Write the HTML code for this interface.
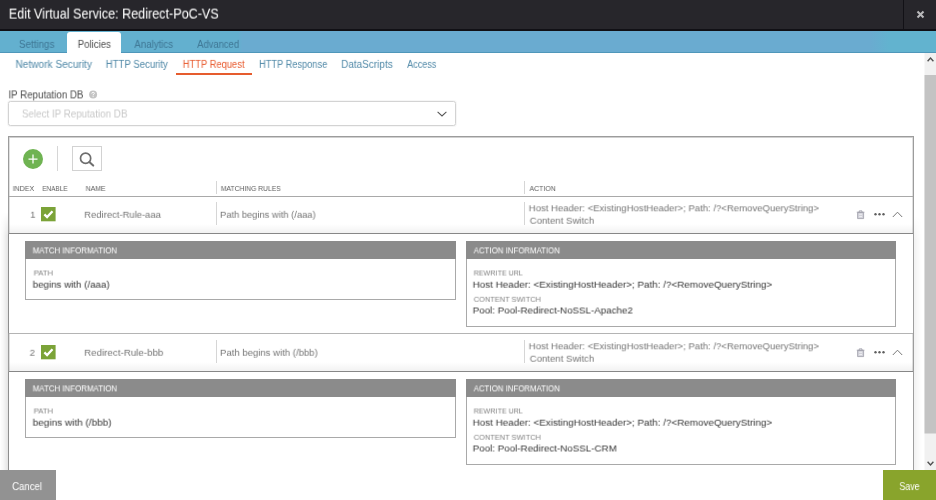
<!DOCTYPE html>
<html>
<head>
<meta charset="utf-8">
<title>Edit Virtual Service</title>
<style>
*{box-sizing:border-box;margin:0;padding:0}
html,body{width:936px;height:500px;overflow:hidden;background:#fff;font-family:"Liberation Sans",sans-serif;}
body{position:relative}
.abs{position:absolute}
.t{position:absolute;white-space:nowrap;line-height:1;transform-origin:0 0;will-change:transform}
#hdr{left:0;top:0;width:936px;height:31px;background:#27262b;border-bottom:2px solid #111015}
#hsep{left:903px;top:0;width:1px;height:29px;background:#121116}
#tabs{left:0;top:31px;width:936px;height:22px;background:linear-gradient(90deg,#63b0cf 0,#63b0cf 25.4%,#6aabd0 25.9%,#6aabd0 93%,#62b3cf 95%,#62b3cf 100%);border-bottom:1px solid #4f97ba}
#tabact{left:67px;top:32px;width:54px;height:22px;background:#fff;border-radius:3px 3px 0 0}
#subline{left:176px;top:73px;width:76px;height:2px;background:#e65c2e}
#sb{left:925px;top:53px;width:11px;height:416px;background:#f1f1f1}
#sbthumb{left:925px;top:75px;width:11px;height:358px;background:#c1c1c1}
#sel{left:8px;top:101px;width:448px;height:25px;border:1px solid #d3d3d3;border-radius:2.5px;background:#fff;box-shadow:0 0 0 1px rgba(0,0,0,.035)}
#grid{left:8px;top:136px;width:906px;height:341px;border:1px solid #9c9c9c;border-bottom:none;box-shadow:inset 0 1px 0 #d0d0d0,inset 1px 0 0 #e0e0e0,inset -1px 0 0 #e0e0e0}
.hl{position:absolute;left:9px;width:904px;height:1px;background:#a9a9a9}
.vs{position:absolute;width:1px;background:#d6d6d6}
.chk{position:absolute;left:41px;width:14px;height:14px;background:#7fa83d}
.exp{position:absolute;left:8px;width:906px;background:#fff;border-left:1px solid #8e8e8e;border-right:1px solid #9e9e9e}
.box{position:absolute;border:1px solid #a9a9a9;background:#fff}
.box .bar{position:absolute;left:-1px;top:-1px;right:-1px;height:18px;background:#8b8b8b}
.shl{position:absolute;left:0;width:8px;background:linear-gradient(90deg,rgba(0,0,0,0),rgba(0,0,0,.03) 40%,rgba(0,0,0,.105));-webkit-mask-image:linear-gradient(180deg,transparent 0,#000 24px);mask-image:linear-gradient(180deg,transparent 0,#000 24px)}
.shr{position:absolute;left:914px;width:8px;background:linear-gradient(90deg,rgba(0,0,0,.05),rgba(0,0,0,0));-webkit-mask-image:linear-gradient(180deg,transparent 0,#000 24px);mask-image:linear-gradient(180deg,transparent 0,#000 24px)}
.sht{position:absolute;left:9px;width:904px;height:9px;background:linear-gradient(180deg,rgba(0,0,0,0),rgba(0,0,0,.05))}
.hl.dk{background:#878787}
#cancel{left:0;top:470px;width:56px;height:30px;background:#929292}
#save{left:883px;top:470px;width:53px;height:30px;background:#89a42c}
</style>
</head>
<body>
<div id="hdr" class="abs"></div>
<div id="hsep" class="abs"></div>
<svg class="abs" style="left:916px;top:9.5px" width="9" height="9" viewBox="0 0 9 9"><path d="M1.5 1.5L7.5 7.5M7.5 1.5L1.5 7.5" stroke="#b9b9bb" stroke-width="2.1" fill="none"/></svg>
<div id="tabs" class="abs"></div>
<div id="tabact" class="abs"></div>
<div id="subline" class="abs"></div>

<svg class="abs" style="left:924px;top:53px" width="12" height="417" viewBox="0 0 12 417"><rect x="0.5" y="0" width="11.5" height="417" fill="#f1f1f1"/><rect x="0.5" y="22" width="11.5" height="358.5" fill="#c3c3c3"/></svg>
<svg class="abs" style="left:927px;top:57px" width="7" height="5" viewBox="0 0 7 5"><path d="M0.6 4.2L3.5 1.1L6.4 4.2" stroke="#505050" stroke-width="1.4" fill="none"/></svg>
<svg class="abs" style="left:927px;top:461px" width="7" height="5" viewBox="0 0 7 5"><path d="M0.6 0.8L3.5 3.9L6.4 0.8" stroke="#505050" stroke-width="1.4" fill="none"/></svg>

<svg class="abs" style="left:89px;top:90px" width="9" height="9" viewBox="0 0 9 9"><circle cx="4.1" cy="4.4" r="4" fill="#c4c4c4"/><path d="M2.8 3.6Q2.8 2.3 4.1 2.3Q5.4 2.3 5.4 3.4Q5.4 4.1 4.1 4.7V5.4" stroke="#fff" stroke-width="0.9" fill="none"/><circle cx="4.1" cy="6.6" r="0.55" fill="#fff"/></svg>
<div id="sel" class="abs">
<svg class="abs" style="left:428px;top:8.5px" width="10" height="6" viewBox="0 0 10 6"><path d="M0.6 0.8L5 5L9.4 0.8" stroke="#555" stroke-width="1.05" fill="none"/></svg>
</div>

<div class="shl" style="top:212px;height:258px"></div><div class="shr" style="top:216px;height:254px"></div>
<div id="grid" class="abs"></div>
<!-- toolbar -->
<div class="abs" style="left:23px;top:149px;width:20px;height:20px;border-radius:50%;background:#6fb352"></div>
<svg class="abs" style="left:28px;top:154px" width="10" height="10" viewBox="0 0 10 10"><path d="M5 0.5V9.5M0.5 5H9.5" stroke="#fff" stroke-width="1.25" fill="none"/></svg>
<div class="vs" style="left:57px;top:146px;height:25px"></div>
<div class="abs" style="left:72px;top:146px;width:30px;height:25px;border:1px solid #d2d2d2"></div>
<svg class="abs" style="left:79px;top:151px" width="16" height="16" viewBox="0 0 16 16"><circle cx="6.6" cy="7.3" r="5.1" stroke="#6e6e6e" stroke-width="1.7" fill="none"/><path d="M10.6 11.2L14.2 14.6" stroke="#6e6e6e" stroke-width="2" stroke-linecap="round"/></svg>

<!-- header -->
<div class="vs" style="left:216px;top:181px;height:13px"></div>
<div class="vs" style="left:524px;top:181px;height:13px"></div>
<div class="hl" style="top:196px"></div>

<!-- row 1 -->
<svg class="abs" style="left:41px;top:207px" width="16" height="16" viewBox="0 0 16 16"><rect x="0" y="0" width="14.6" height="14.3" fill="#7ba338"/><path d="M3.4 7.4L6.1 10.1L11.5 4.3" stroke="#fff" stroke-width="2.3" fill="none"/></svg>
<div class="vs" style="left:216px;top:202px;height:23px"></div>
<div class="vs" style="left:524px;top:202px;height:23px"></div>
<svg class="abs ico" style="left:856px;top:209px" width="48" height="11" viewBox="0 0 48 11"><path d="M1.6 3.6H7.6V9.6H1.6Z" fill="#d2d2da" stroke="#9d9da8" stroke-width="0.8"/><path d="M0.8 3.2H8.4M3.2 3V1.9H6V3" stroke="#9d9da8" stroke-width="0.9" fill="none"/><path d="M3.2 5.2H6M3.2 7.6H6" stroke="#f4f4f6" stroke-width="0.9" fill="none"/><circle cx="19.5" cy="5.2" r="1.2" fill="#5e5e5e"/><circle cx="23.5" cy="5.2" r="1.2" fill="#5e5e5e"/><circle cx="27.5" cy="5.2" r="1.2" fill="#5e5e5e"/><path d="M36.8 8L41.5 3.2L46.2 8" stroke="#707070" stroke-width="0.95" fill="none"/></svg>
<div class="sht" style="top:224px"></div><div class="hl dk" style="top:233px"></div>

<!-- expand 1 -->
<div class="exp" style="top:234px;height:99px"></div>
<div class="box" style="left:25px;top:241px;width:431px;height:59px"><div class="bar"></div></div>
<div class="box" style="left:466px;top:241px;width:430px;height:86px"><div class="bar"></div></div>
<div class="hl" style="top:333px;background:#b4b4b4"></div>

<!-- row 2 -->
<svg class="abs" style="left:41px;top:345px" width="16" height="16" viewBox="0 0 16 16"><rect x="0" y="0" width="14.6" height="14.3" fill="#7ba338"/><path d="M3.4 7.4L6.1 10.1L11.5 4.3" stroke="#fff" stroke-width="2.3" fill="none"/></svg>
<div class="vs" style="left:216px;top:340px;height:23px"></div>
<div class="vs" style="left:524px;top:340px;height:23px"></div>
<svg class="abs ico" style="left:856px;top:347px" width="48" height="11" viewBox="0 0 48 11"><path d="M1.6 3.6H7.6V9.6H1.6Z" fill="#d2d2da" stroke="#9d9da8" stroke-width="0.8"/><path d="M0.8 3.2H8.4M3.2 3V1.9H6V3" stroke="#9d9da8" stroke-width="0.9" fill="none"/><path d="M3.2 5.2H6M3.2 7.6H6" stroke="#f4f4f6" stroke-width="0.9" fill="none"/><circle cx="19.5" cy="5.2" r="1.2" fill="#5e5e5e"/><circle cx="23.5" cy="5.2" r="1.2" fill="#5e5e5e"/><circle cx="27.5" cy="5.2" r="1.2" fill="#5e5e5e"/><path d="M36.8 8L41.5 3.2L46.2 8" stroke="#707070" stroke-width="0.95" fill="none"/></svg>
<div class="sht" style="top:362px"></div><div class="hl dk" style="top:371px"></div>

<!-- expand 2 -->
<div class="exp" style="top:372px;height:105px"></div>
<div class="box" style="left:25px;top:379px;width:431px;height:59px"><div class="bar"></div></div>
<div class="box" style="left:466px;top:379px;width:430px;height:86px"><div class="bar"></div></div>

<!-- footer -->
<div class="abs" style="left:0;top:470px;width:924px;height:30px;background:#fff"></div>
<div id="cancel" class="abs"></div>
<div id="save" class="abs"></div>
<div class="t" style="left:8px;top:7px;font-size:13.8px;color:#ffffff;transform:translate(0.79px,0.60px) scaleX(0.9140) rotate(.003deg);">Edit Virtual Service: Redirect-PoC-VS</div>
<div class="t" style="left:18px;top:39px;font-size:10px;color:#3d7593;transform:translate(0.92px,0.90px) scaleX(0.9829) rotate(.003deg);">Settings</div>
<div class="t" style="left:77px;top:39px;font-size:10px;color:#4d4d4d;transform:translate(0.74px,0.90px) scaleX(0.9606) rotate(.003deg);">Policies</div>
<div class="t" style="left:134px;top:39px;font-size:10px;color:#3d7593;transform:translate(0.40px,0.90px) scaleX(0.9675) rotate(.003deg);">Analytics</div>
<div class="t" style="left:197px;top:39px;font-size:10px;color:#3d7593;transform:translate(0.20px,0.90px) scaleX(0.9409) rotate(.003deg);">Advanced</div>
<div class="t" style="left:15px;top:59px;font-size:10px;color:#4f88a7;transform:translate(0.49px,0.90px) scaleX(1.0122) rotate(.003deg);">Network Security</div>
<div class="t" style="left:105px;top:59px;font-size:10px;color:#4f88a7;transform:translate(0.74px,0.90px) scaleX(0.9594) rotate(.003deg);">HTTP Security</div>
<div class="t" style="left:182px;top:59px;font-size:10px;color:#e8582b;transform:translate(0.76px,0.90px) scaleX(0.9369) rotate(.003deg);">HTTP Request</div>
<div class="t" style="left:259px;top:59px;font-size:10px;color:#4f88a7;transform:translate(0.07px,0.90px) scaleX(0.9250) rotate(.003deg);">HTTP Response</div>
<div class="t" style="left:341px;top:59px;font-size:10px;color:#4f88a7;transform:translate(0.20px,0.90px) scaleX(0.9980) rotate(.003deg);">DataScripts</div>
<div class="t" style="left:407px;top:59px;font-size:10px;color:#4f88a7;transform:translate(0.20px,0.90px) scaleX(0.9031) rotate(.003deg);">Access</div>
<div class="t" style="left:8px;top:90px;font-size:10.2px;color:#4a4a4a;transform:translate(0.45px,0.40px) scaleX(0.9545) rotate(.003deg);">IP Reputation DB</div>
<div class="t" style="left:21px;top:109px;font-size:10.2px;color:#c8c8c8;transform:translate(0.94px,0.50px) scaleX(0.9620) rotate(.003deg);">Select IP Reputation DB</div>
<div class="t" style="left:12px;top:185px;font-size:7.6px;color:#5c5c5c;transform:translate(0.78px,0.00px) scaleX(0.9182) rotate(.003deg);">INDEX</div>
<div class="t" style="left:42px;top:185px;font-size:7.6px;color:#5c5c5c;transform:translate(0.40px,0.00px) scaleX(0.8400) rotate(.003deg);">ENABLE</div>
<div class="t" style="left:85px;top:185px;font-size:7.6px;color:#5c5c5c;transform:translate(0.70px,0.00px) scaleX(0.9095) rotate(.003deg);">NAME</div>
<div class="t" style="left:220px;top:185px;font-size:7.6px;color:#5c5c5c;transform:translate(0.90px,0.00px) scaleX(0.8881) rotate(.003deg);">MATCHING RULES</div>
<div class="t" style="left:529px;top:185px;font-size:7.6px;color:#5c5c5c;transform:translate(0.60px,0.00px) scaleX(0.9107) rotate(.003deg);">ACTION</div>
<div class="t" style="left:30px;top:209px;font-size:9.6px;color:#747474;transform:translate(0.20px,0.80px) scaleX(1.0000) rotate(.003deg);">1</div>
<div class="t" style="left:84px;top:209px;font-size:9.6px;color:#747474;transform:translate(0.21px,0.80px) scaleX(0.9857) rotate(.003deg);">Redirect-Rule-aaa</div>
<div class="t" style="left:220px;top:209px;font-size:9.6px;color:#747474;transform:translate(0.03px,0.80px) scaleX(0.9742) rotate(.003deg);">Path begins with (/aaa)</div>
<div class="t" style="left:528px;top:203px;font-size:9.5px;color:#747474;transform:translate(0.70px,0.30px) scaleX(1.0049) rotate(.003deg);">Host Header: &lt;ExistingHostHeader&gt;; Path: /?&lt;RemoveQueryString&gt;</div>
<div class="t" style="left:529px;top:215px;font-size:9.5px;color:#747474;transform:translate(0.70px,0.75px) scaleX(1.0095) rotate(.003deg);">Content Switch</div>
<div class="t" style="left:32px;top:247px;font-size:8.2px;color:#ffffff;transform:translate(0.74px,0.40px) scaleX(0.9640) rotate(.003deg);">MATCH INFORMATION</div>
<div class="t" style="left:473px;top:247px;font-size:8.2px;color:#ffffff;transform:translate(0.70px,0.40px) scaleX(0.9596) rotate(.003deg);">ACTION INFORMATION</div>
<div class="t" style="left:33px;top:269px;font-size:7.4px;color:#808080;transform:translate(0.70px,0.50px) scaleX(1.0389) rotate(.003deg);">PATH</div>
<div class="t" style="left:32px;top:279px;font-size:9.7px;color:#333333;transform:translate(0.69px,0.70px) scaleX(1.0053) rotate(.003deg);">begins with (/aaa)</div>
<div class="t" style="left:473px;top:269px;font-size:7.4px;color:#808080;transform:translate(0.70px,0.50px) scaleX(0.9640) rotate(.003deg);">REWRITE URL</div>
<div class="t" style="left:472px;top:279px;font-size:9.7px;color:#333333;transform:translate(0.68px,0.70px) scaleX(1.0167) rotate(.003deg);">Host Header: &lt;ExistingHostHeader&gt;; Path: /?&lt;RemoveQueryString&gt;</div>
<div class="t" style="left:473px;top:295px;font-size:7.4px;color:#808080;transform:translate(0.70px,0.80px) scaleX(1.0061) rotate(.003deg);">CONTENT SWITCH</div>
<div class="t" style="left:472px;top:305px;font-size:9.7px;color:#333333;transform:translate(0.69px,0.50px) scaleX(1.0076) rotate(.003deg);">Pool: Pool-Redirect-NoSSL-Apache2</div>
<div class="t" style="left:29px;top:347px;font-size:9.6px;color:#747474;transform:translate(0.65px,0.80px) scaleX(1.0000) rotate(.003deg);">2</div>
<div class="t" style="left:84px;top:347px;font-size:9.6px;color:#747474;transform:translate(0.18px,0.80px) scaleX(1.0184) rotate(.003deg);">Redirect-Rule-bbb</div>
<div class="t" style="left:220px;top:347px;font-size:9.6px;color:#747474;transform:translate(0.00px,0.80px) scaleX(0.9959) rotate(.003deg);">Path begins with (/bbb)</div>
<div class="t" style="left:528px;top:341px;font-size:9.5px;color:#747474;transform:translate(0.70px,0.30px) scaleX(1.0049) rotate(.003deg);">Host Header: &lt;ExistingHostHeader&gt;; Path: /?&lt;RemoveQueryString&gt;</div>
<div class="t" style="left:529px;top:353px;font-size:9.5px;color:#747474;transform:translate(0.70px,0.75px) scaleX(1.0095) rotate(.003deg);">Content Switch</div>
<div class="t" style="left:32px;top:385px;font-size:8.2px;color:#ffffff;transform:translate(0.74px,0.40px) scaleX(0.9640) rotate(.003deg);">MATCH INFORMATION</div>
<div class="t" style="left:473px;top:385px;font-size:8.2px;color:#ffffff;transform:translate(0.70px,0.40px) scaleX(0.9596) rotate(.003deg);">ACTION INFORMATION</div>
<div class="t" style="left:33px;top:407px;font-size:7.4px;color:#808080;transform:translate(0.70px,0.50px) scaleX(1.0389) rotate(.003deg);">PATH</div>
<div class="t" style="left:32px;top:417px;font-size:9.7px;color:#333333;transform:translate(0.67px,0.70px) scaleX(1.0320) rotate(.003deg);">begins with (/bbb)</div>
<div class="t" style="left:473px;top:407px;font-size:7.4px;color:#808080;transform:translate(0.70px,0.50px) scaleX(0.9640) rotate(.003deg);">REWRITE URL</div>
<div class="t" style="left:472px;top:417px;font-size:9.7px;color:#333333;transform:translate(0.68px,0.70px) scaleX(1.0167) rotate(.003deg);">Host Header: &lt;ExistingHostHeader&gt;; Path: /?&lt;RemoveQueryString&gt;</div>
<div class="t" style="left:473px;top:433px;font-size:7.4px;color:#808080;transform:translate(0.70px,0.80px) scaleX(1.0061) rotate(.003deg);">CONTENT SWITCH</div>
<div class="t" style="left:472px;top:443px;font-size:9.7px;color:#333333;transform:translate(0.69px,0.50px) scaleX(1.0099) rotate(.003deg);">Pool: Pool-Redirect-NoSSL-CRM</div>
<div class="t" style="left:12px;top:482px;font-size:10.2px;color:#ffffff;transform:translate(0.20px,0.10px) scaleX(0.9387) rotate(.003deg);">Cancel</div>
<div class="t" style="left:899px;top:482px;font-size:10.2px;color:#ffffff;transform:translate(0.43px,0.10px) scaleX(0.8682) rotate(.003deg);">Save</div>
</body>
</html>
